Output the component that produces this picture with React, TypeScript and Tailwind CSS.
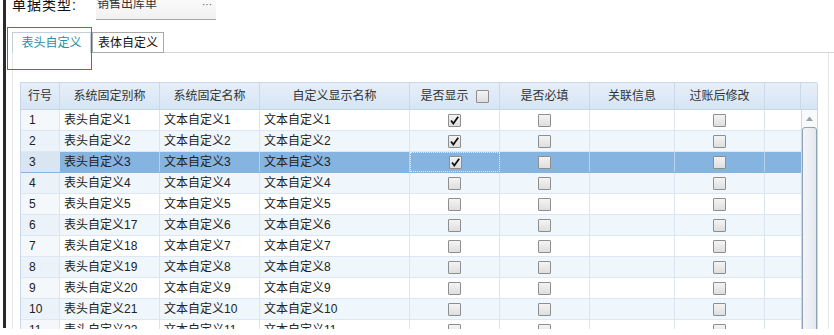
import React from "react";

type Row = { no: number; alias: string; name: string; display: string; show: boolean };

const rows: Row[] = [
  { no: 1, alias: "表头自定义1", name: "文本自定义1", display: "文本自定义1", show: true },
  { no: 2, alias: "表头自定义2", name: "文本自定义2", display: "文本自定义2", show: true },
  { no: 3, alias: "表头自定义3", name: "文本自定义3", display: "文本自定义3", show: true },
  { no: 4, alias: "表头自定义4", name: "文本自定义4", display: "文本自定义4", show: false },
  { no: 5, alias: "表头自定义5", name: "文本自定义5", display: "文本自定义5", show: false },
  { no: 6, alias: "表头自定义17", name: "文本自定义6", display: "文本自定义6", show: false },
  { no: 7, alias: "表头自定义18", name: "文本自定义7", display: "文本自定义7", show: false },
  { no: 8, alias: "表头自定义19", name: "文本自定义8", display: "文本自定义8", show: false },
  { no: 9, alias: "表头自定义20", name: "文本自定义9", display: "文本自定义9", show: false },
  { no: 10, alias: "表头自定义21", name: "文本自定义10", display: "文本自定义10", show: false },
  { no: 11, alias: "表头自定义22", name: "文本自定义11", display: "文本自定义11", show: false },
];

const SELECTED = 3;

function Check({ checked = false }: { checked?: boolean }) {
  return (
    <span className="flex h-[13px] w-[13px] items-center justify-center rounded-[1px] border border-[#8e8e8e] bg-gradient-to-b from-[#f4f4f4] to-[#dedede]">
      {checked && (
        <svg width="11" height="11" viewBox="0 0 11 11">
          <path d="M2 5.5 L4.3 8.5 L9.2 1.8" fill="none" stroke="#111" strokeWidth="1.8" />
        </svg>
      )}
    </span>
  );
}

const headers = ["行号", "系统固定别称", "系统固定名称", "自定义显示名称", "是否显示", "是否必填", "关联信息", "过账后修改", ""];
const cols = "grid grid-cols-[39px_100px_100px_150px_90px_90px_85px_90px_36px]";

export default function App() {
  return (
    <div
      className="relative flex h-[335px] w-[834px] overflow-hidden bg-white pl-[3px] text-[12px] text-[#222]"
      style={{ fontFamily: '"Liberation Sans", "Noto Sans CJK SC", sans-serif' }}
    >
      <div className="h-[328px] w-[3px] shrink-0 bg-[#2a2a2a]" />

      <div className="flex flex-1 flex-col pl-[6px]">
        {/* top field, cut off by the window edge */}
        <div className="-mt-[11px] flex h-[31px] items-center">
          <span className="w-[84px] text-[14px] leading-none tracking-[1px] text-[#111]">单据类型:</span>
          <div className="flex h-[31px] w-[120px] items-center justify-between border-b border-[#a8a8a8] bg-gradient-to-b from-white to-[#f1f1f1] pl-[1px] pr-[4px] text-[#333]">
            <span>销售出库单</span>
            <span className="text-[10px] text-[#555]">···</span>
          </div>
        </div>

        {/* tabs */}
        <div className="mt-[12px] flex h-[21px] items-stretch">
          <div className="flex w-[79px] items-center justify-center border-x border-t border-[#c3d0da] bg-white text-[#2e8da6]">
            表头自定义
          </div>
          <div className="ml-[1px] flex w-[72px] items-center justify-center border border-[#a9a9a9] text-[#111]">
            表体自定义
          </div>
          <div className="flex-1 border-b border-[#d6d6d6]" />
        </div>

        {/* panel */}
        <div className="h-[276px] w-[817px] border-l border-r border-[#e6e6e6] pl-[7px] pt-[29px]">
          <div className="h-[247px] w-[798px] overflow-hidden rounded-tr-[3px] border-l border-t border-r border-[#c8d8e8]">
            {/* header */}
            <div className="flex h-[27px] border-b border-[#c5d6e6] bg-gradient-to-b from-[#e6eff9] to-[#d6e5f4]">
              <div className={cols}>
                {headers.map((h, i) => (
                  <div key={i} className="flex items-center justify-center border-r border-[#c9d9e9] text-[#333]">
                    {h}
                    {i === 4 && (
                      <span className="ml-[7px]">
                        <Check />
                      </span>
                    )}
                  </div>
                ))}
              </div>
              <div className="flex-1" />
            </div>

            {/* body */}
            <div className="flex">
              <div className="w-[780px]">
                {rows.map((r) => {
                  const sel = r.no === SELECTED;
                  const even = r.no % 2 === 0;
                  const rowBg = sel ? "bg-[#86b4e0]" : even ? "bg-[#eff6fc]" : "bg-white";
                  const line = sel ? "border-[#b9d2ea]" : "border-[#dae5ef]";
                  return (
                    <div key={r.no} className={`${cols} h-[21px] border-b ${sel ? "border-[#86b4e0]" : "border-[#dde7f1]"}`}>
                      <div
                        className={`flex items-center border-r border-[#dae5ef] pl-[8px] ${
                          sel ? "bg-[#d9e6f2]" : even ? "bg-[#ebf2f9]" : "bg-[#f5f8fb]"
                        }`}
                      >
                        {r.no}
                      </div>
                      <div className={`flex items-center border-r pl-[4px] ${rowBg} ${line}`}>{r.alias}</div>
                      <div className={`flex items-center border-r pl-[4px] ${rowBg} ${line}`}>{r.name}</div>
                      <div className={`flex items-center border-r pl-[4px] ${rowBg} ${line}`}>{r.display}</div>
                      <div
                        className={`flex items-center justify-center ${rowBg} ${
                          sel ? "border border-dotted border-[#e4eef8]" : `border-r ${line}`
                        }`}
                      >
                        <Check checked={r.show} />
                      </div>
                      <div className={`flex items-center justify-center border-r ${rowBg} ${line}`}>
                        <Check />
                      </div>
                      <div className={`border-r ${rowBg} ${line}`} />
                      <div className={`flex items-center justify-center border-r ${rowBg} ${line}`}>
                        <Check />
                      </div>
                      <div className={`${rowBg}`} />
                    </div>
                  );
                })}
              </div>

              {/* scrollbar */}
              <div className="flex w-[17px] flex-col items-center border-l border-[#c8d8e8] bg-[#f7f9fb]">
                <svg width="7" height="5" viewBox="0 0 7 5" className="mt-[6px]">
                  <path d="M0 5 L3.5 0.5 L7 5 Z" fill="#9aa3ad" />
                </svg>
                <div className="mt-[6px] h-[240px] w-[15px] rounded-[3px] border border-[#8fa2bd] bg-gradient-to-r from-[#f3f5f8] to-[#e4e9ef]" />
              </div>
            </div>
          </div>
        </div>
      </div>

      {/* annotation box */}
      <div className="absolute left-[7px] top-[27px] h-[43px] w-[85px] border border-[#c9404a]" />
    </div>
  );
}
